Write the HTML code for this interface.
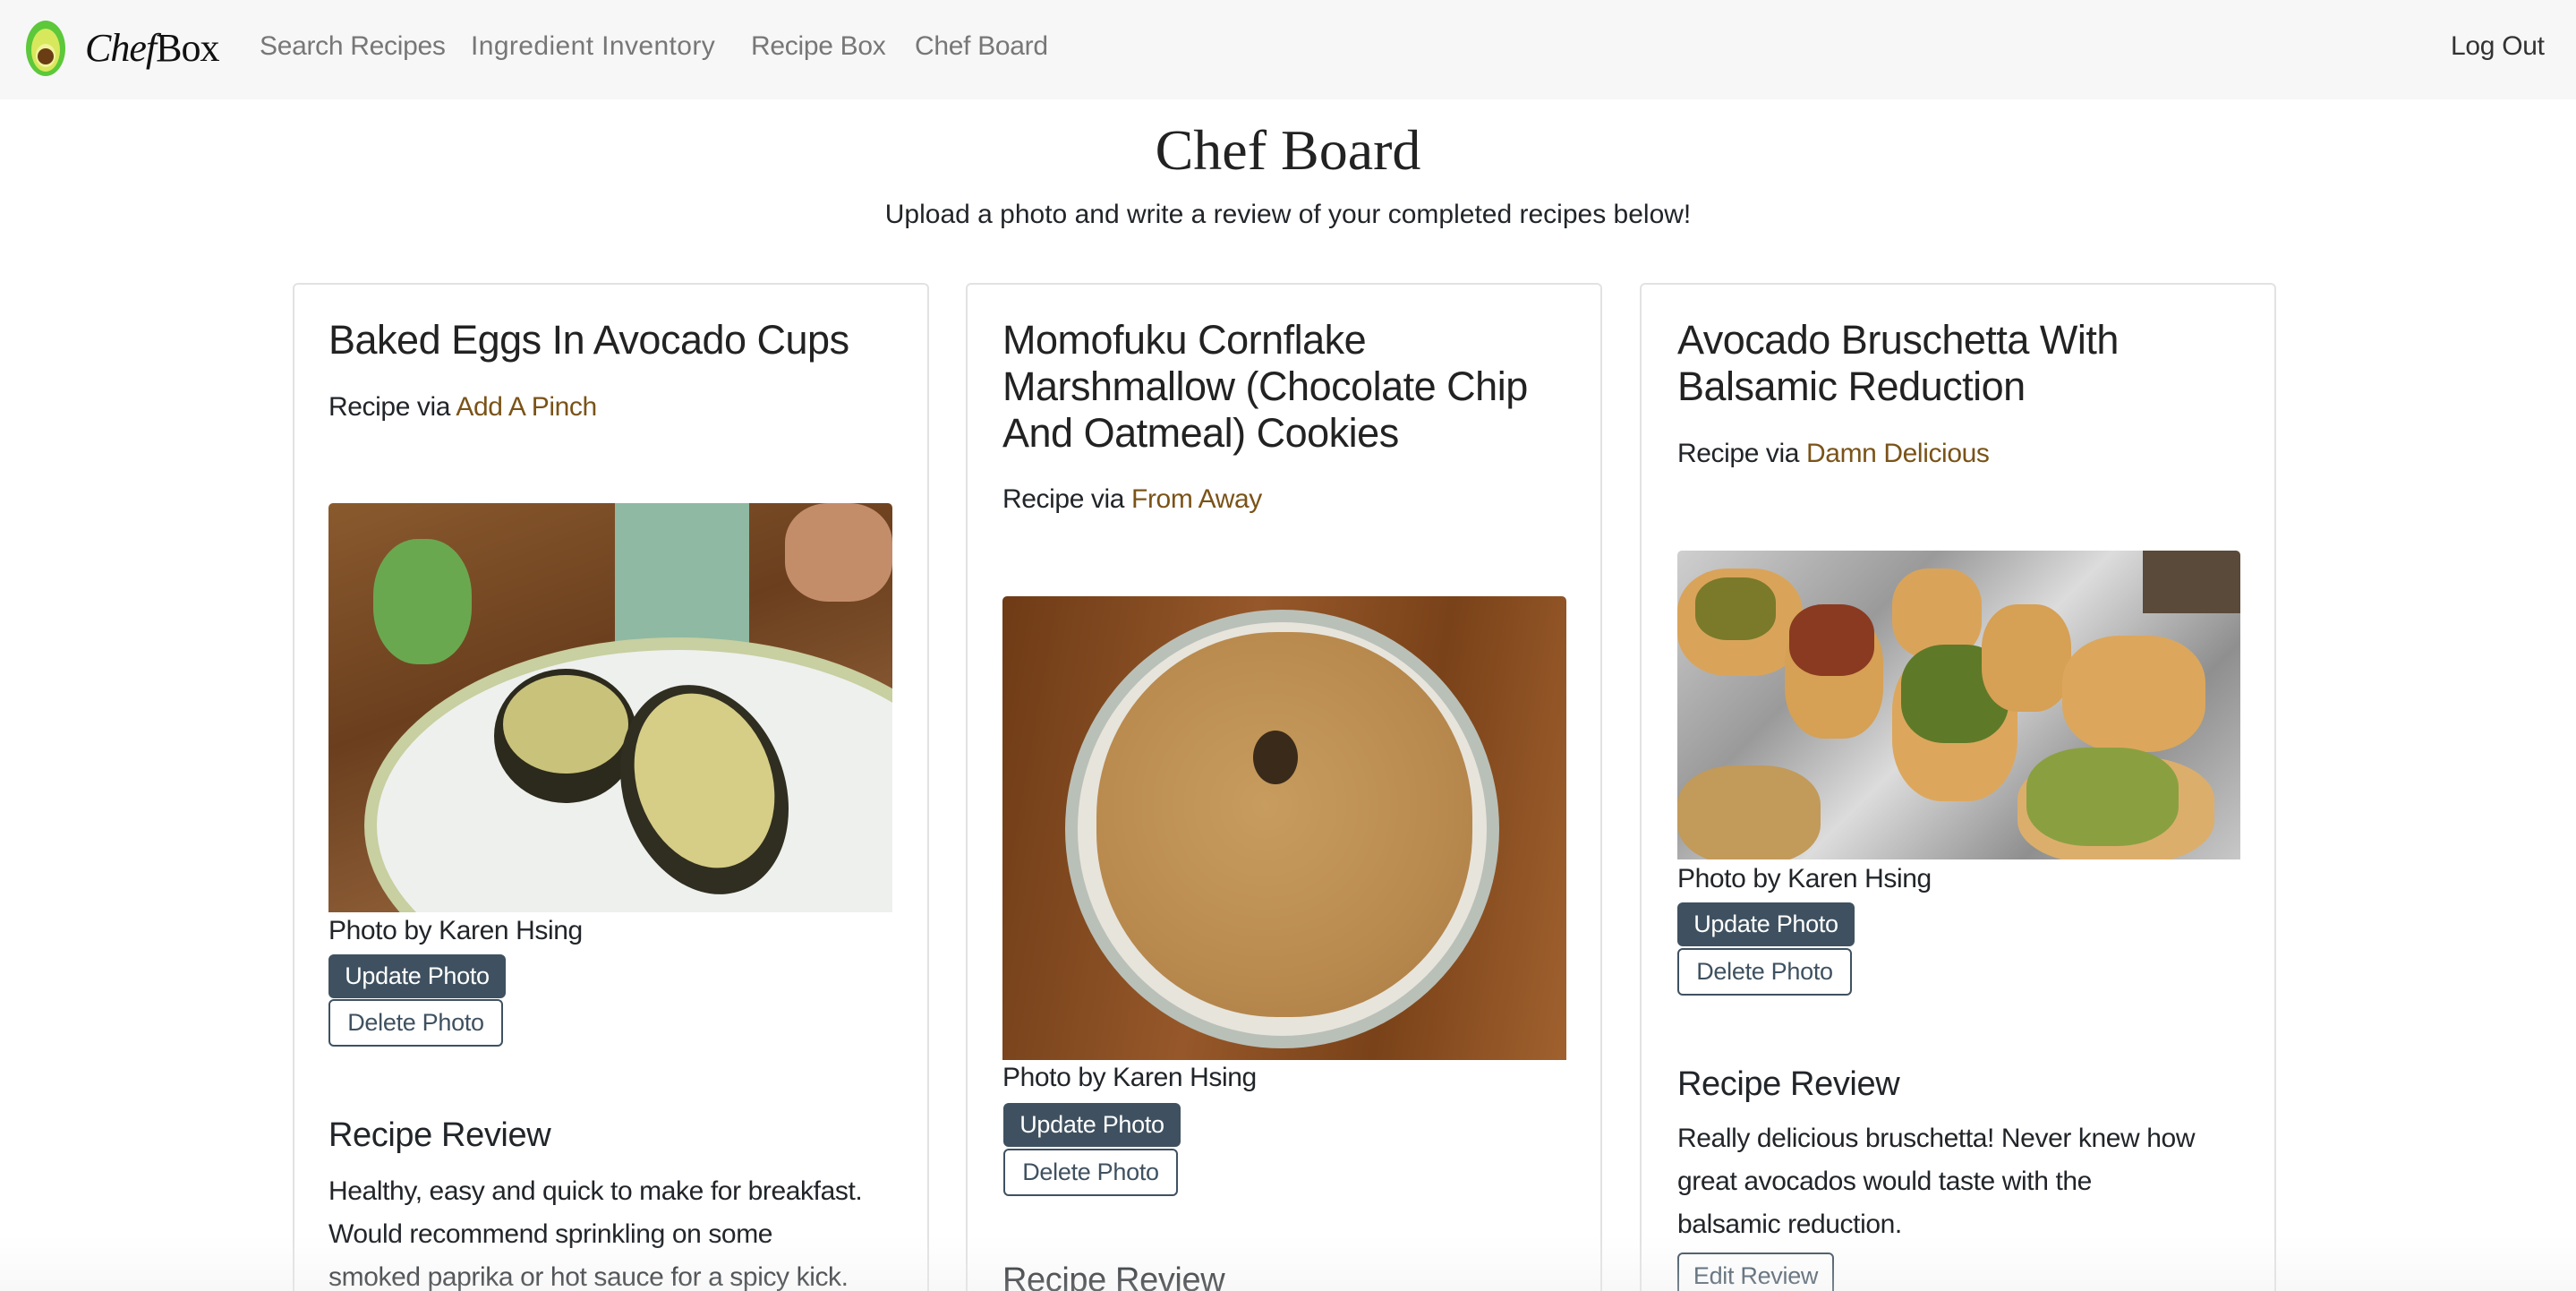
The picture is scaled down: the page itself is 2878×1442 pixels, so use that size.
<!DOCTYPE html>
<html style="width:2878px;height:1442px;overflow:hidden"><head><meta charset="utf-8"><style>
*{margin:0;padding:0;box-sizing:border-box}
body{width:2878px;height:1442px;overflow:hidden;background:#fff;font-family:"Liberation Sans",sans-serif;color:#212529;position:relative}
.nav{position:absolute;left:0;top:0;width:2878px;height:111px;background:#f7f7f7}
.nl{position:absolute;top:32px;font-size:30px;color:#777;line-height:40px;letter-spacing:-0.3px}
.a{position:absolute;white-space:nowrap}
.card{position:absolute;top:316px;width:711px;height:1126px;border:2px solid #e2e2e2;border-bottom:none;border-radius:6px 6px 0 0;background:#fff}
.t{font-size:45px;line-height:52px;letter-spacing:-0.5px;color:#222}
.p{font-size:30px;line-height:40px;letter-spacing:-0.4px}
.lk{color:#7a5318}
.h{font-size:38px;line-height:46px;letter-spacing:-0.4px}
.b1{position:absolute;width:198px;height:49px;background:#3f5160;color:#fff;border-radius:6px;font-size:27px;line-height:49px;text-align:center;letter-spacing:-0.3px}
.b2{position:absolute;width:195px;height:53px;border:2px solid #3f5160;color:#3f5160;border-radius:6px;font-size:27px;line-height:49px;text-align:center;letter-spacing:-0.3px}
.img{position:absolute;overflow:hidden;border-radius:5px 5px 0 0}
</style></head><body>
<div class="nav">
  <svg class="a" style="left:26px;top:22px" width="50" height="64" viewBox="0 0 50 64">
    <ellipse cx="25" cy="32" rx="22" ry="31" fill="#5cc83a"/>
    <ellipse cx="25" cy="34" rx="16" ry="24" fill="#d8e85c"/>
    <ellipse cx="25" cy="40" rx="11" ry="13" fill="#f0f39a"/>
    <circle cx="25" cy="41" r="9" fill="#6a3d14"/>
  </svg>
  <div class="a" style="left:95px;top:24px;font-family:'Liberation Serif',serif;font-size:44px;line-height:60px;color:#111;letter-spacing:-1px"><i>Chef</i>Box</div>
  <div class="nl" style="left:290px">Search Recipes</div>
  <div class="nl" style="left:526px;letter-spacing:0.4px">Ingredient Inventory</div>
  <div class="nl" style="left:839px">Recipe Box</div>
  <div class="nl" style="left:1022px">Chef Board</div>
  <div class="nl" style="left:2738px;color:#333">Log Out</div>
</div>
<div class="a" style="left:0;width:2878px;text-align:center;top:128px;font-family:'Liberation Serif',serif;font-size:64px;line-height:80px;color:#222">Chef Board</div>
<div class="a" style="left:0;width:2878px;text-align:center;top:220px;font-size:30px;line-height:40px;letter-spacing:0px">Upload a photo and write a review of your completed recipes below!</div>

<!-- card 1 -->
<div class="card" style="left:327px"></div>
<div class="a t" style="left:367px;top:354px">Baked Eggs In Avocado Cups</div>
<div class="a p" style="left:367px;top:435px">Recipe via <span class="lk">Add A Pinch</span></div>
<div class="img" style="left:367px;top:562px;width:630px;height:457px;background:linear-gradient(160deg,#8a5a2e 0%,#6b3f1e 40%,#a8764a 100%)">
  <div class="a" style="left:320px;top:0;width:150px;height:200px;background:#8fb9a2"></div>
  <div class="a" style="left:50px;top:40px;width:110px;height:140px;border-radius:45%;background:#6aa84f"></div>
  <div class="a" style="left:40px;top:150px;width:700px;height:420px;border-radius:50%;background:#eef0ee;border:14px solid #c8cfa0"></div>
  <div class="a" style="left:185px;top:185px;width:160px;height:150px;border-radius:50%;background:#2c2a1c"></div>
  <div class="a" style="left:195px;top:192px;width:140px;height:110px;border-radius:50%;background:#c9c27a"></div>
  <div class="a" style="left:330px;top:200px;width:180px;height:240px;border-radius:50%;background:#2f2e20;transform:rotate(-20deg)"></div>
  <div class="a" style="left:345px;top:210px;width:150px;height:200px;border-radius:50%;background:#d6cd86;transform:rotate(-20deg)"></div>
  <div class="a" style="left:510px;top:0;width:120px;height:110px;background:#c48d6a;border-radius:40%"></div>
</div>
<div class="a p" style="left:367px;top:1020px">Photo by Karen Hsing</div>
<div class="b1" style="left:367px;top:1066px">Update Photo</div>
<div class="b2" style="left:367px;top:1116px">Delete Photo</div>
<div class="a h" style="left:367px;top:1245px">Recipe Review</div>
<div class="a p" style="left:367px;top:1307px;line-height:48px">Healthy, easy and quick to make for breakfast.<br>Would recommend sprinkling on some<br>smoked paprika or hot sauce for a spicy kick.</div>

<!-- card 2 -->
<div class="card" style="left:1079px"></div>
<div class="a t" style="left:1120px;top:354px">Momofuku Cornflake<br>Marshmallow (Chocolate Chip<br>And Oatmeal) Cookies</div>
<div class="a p" style="left:1120px;top:538px">Recipe via <span class="lk">From Away</span></div>
<div class="img" style="left:1120px;top:666px;width:630px;height:518px;background:linear-gradient(100deg,#6e3b16 0%,#96582a 40%,#7a4219 70%,#a0612e 100%)">
  <div class="a" style="left:70px;top:15px;width:485px;height:490px;border-radius:50%;background:#e7e4dc;border:14px solid #b9c0b8"></div>
  <div class="a" style="left:105px;top:40px;width:420px;height:430px;border-radius:48%;background:radial-gradient(circle at 45% 45%,#c79c5e,#b98a4e 60%,#a87a44)"></div>
  <div class="a" style="left:280px;top:150px;width:50px;height:60px;border-radius:50%;background:#3a2a1a"></div>
</div>
<div class="a p" style="left:1120px;top:1184px">Photo by Karen Hsing</div>
<div class="b1" style="left:1121px;top:1232px">Update Photo</div>
<div class="b2" style="left:1121px;top:1283px">Delete Photo</div>
<div class="a h" style="left:1120px;top:1407px">Recipe Review</div>

<!-- card 3 -->
<div class="card" style="left:1832px"></div>
<div class="a t" style="left:1874px;top:354px">Avocado Bruschetta With<br>Balsamic Reduction</div>
<div class="a p" style="left:1874px;top:487px">Recipe via <span class="lk">Damn Delicious</span></div>
<div class="img" style="left:1874px;top:615px;width:629px;height:345px;background:linear-gradient(135deg,#cfcfcf 0%,#9a9a9a 30%,#dcdcdc 50%,#8f8f8f 75%,#c8c8c8 100%)">
  <div class="a" style="left:0;top:20px;width:140px;height:120px;border-radius:40%;background:#d9a45a"></div>
  <div class="a" style="left:20px;top:30px;width:90px;height:70px;border-radius:40%;background:#7a7a2a"></div>
  <div class="a" style="left:120px;top:70px;width:110px;height:140px;border-radius:40%;background:#d6a055"></div>
  <div class="a" style="left:125px;top:60px;width:95px;height:80px;border-radius:40%;background:#8a3a20"></div>
  <div class="a" style="left:240px;top:20px;width:100px;height:100px;border-radius:40%;background:#d9a45a"></div>
  <div class="a" style="left:240px;top:110px;width:140px;height:170px;border-radius:40%;background:#dca75c"></div>
  <div class="a" style="left:250px;top:105px;width:120px;height:110px;border-radius:40%;background:#5e7a28"></div>
  <div class="a" style="left:340px;top:60px;width:100px;height:120px;border-radius:40%;background:#d6a055"></div>
  <div class="a" style="left:430px;top:95px;width:160px;height:130px;border-radius:40%;background:#dca75c"></div>
  <div class="a" style="left:380px;top:230px;width:220px;height:120px;border-radius:40%;background:#dcae6c"></div>
  <div class="a" style="left:390px;top:220px;width:170px;height:110px;border-radius:40%;background:#8aa040"></div>
  <div class="a" style="left:0;top:240px;width:160px;height:110px;border-radius:40%;background:#c29a5a"></div>
  <div class="a" style="left:520px;top:0;width:110px;height:70px;background:#5a4a3a"></div>
</div>
<div class="a p" style="left:1874px;top:962px">Photo by Karen Hsing</div>
<div class="b1" style="left:1874px;top:1008px">Update Photo</div>
<div class="b2" style="left:1874px;top:1059px">Delete Photo</div>
<div class="a h" style="left:1874px;top:1188px">Recipe Review</div>
<div class="a p" style="left:1874px;top:1248px;line-height:48px">Really delicious bruschetta! Never knew how<br>great avocados would taste with the<br>balsamic reduction.</div>
<div class="b2" style="left:1874px;top:1399px;width:175px">Edit Review</div>

<div class="a" style="left:0;top:1380px;width:2878px;height:62px;background:linear-gradient(rgba(235,235,235,0),rgba(235,235,235,0.35))"></div>
</body></html>
